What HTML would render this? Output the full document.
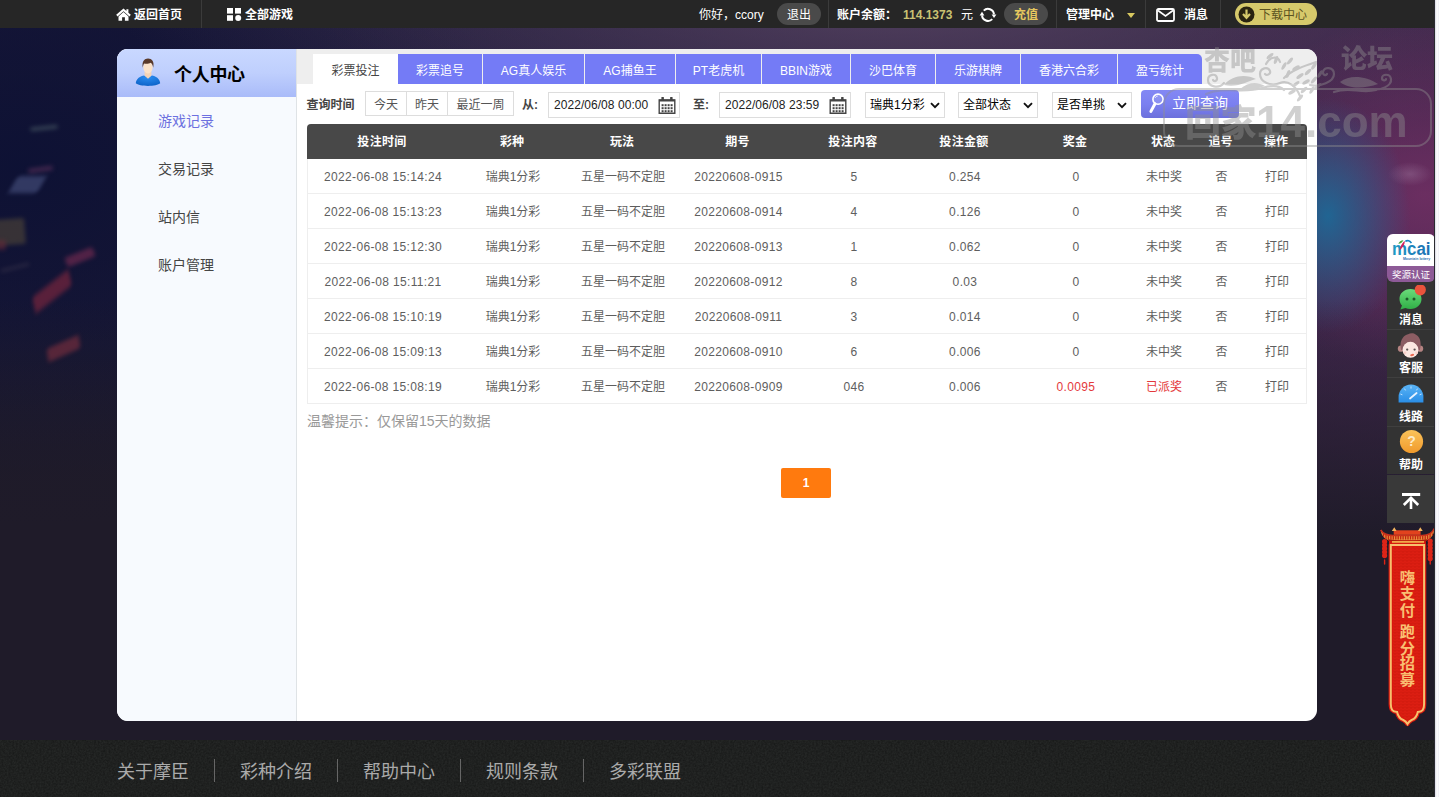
<!DOCTYPE html>
<html lang="zh-CN">
<head>
<meta charset="utf-8">
<title>个人中心</title>
<style>
*{box-sizing:border-box;margin:0;padding:0}
html,body{width:1439px;height:797px;overflow:hidden}
body{position:relative;font-family:"Liberation Sans","Noto Sans CJK SC",sans-serif;font-size:12px;color:#444;
background:#1f1b29;}
.abs{position:absolute}
#bg{position:absolute;left:0;top:0;width:1439px;height:797px;overflow:hidden;
background:
radial-gradient(ellipse 22px 12px at 1410px 174px,rgba(210,190,220,.22),rgba(210,190,220,0) 100%),
radial-gradient(ellipse 82px 118px at 1328px 216px,rgba(30,104,150,.95),rgba(36,100,140,0) 100%),
radial-gradient(ellipse 210px 180px at 1425px 195px,rgba(118,48,102,.78),rgba(110,50,100,0) 100%),
radial-gradient(ellipse 330px 420px at 1439px 250px,rgba(74,40,82,.8),rgba(70,40,80,0) 100%),
radial-gradient(ellipse 780px 150px at 900px 10px,rgba(90,70,100,.78),rgba(90,70,100,0) 100%),
linear-gradient(90deg,rgba(24,22,60,0) 0,rgba(24,22,60,0) 22%,rgba(58,40,72,.85) 100%) 0 0/1439px 560px no-repeat,
radial-gradient(ellipse 520px 360px at 20px 170px,rgba(13,17,52,.95),rgba(20,20,52,0) 100%),
linear-gradient(180deg,#1a1838 0,#1c1a36 330px,#1f1b29 480px,#1f1b29 100%);
}
#bgfade{position:absolute;left:0;top:0;width:1439px;height:797px;background:linear-gradient(180deg,rgba(31,27,41,0) 0,rgba(31,27,41,0) 300px,rgba(31,27,41,1) 540px)}
.conf{position:absolute;filter:blur(2.200px);border-radius:2px}
/* top bar */
#top{position:absolute;left:0;top:0;width:1439px;height:28px;background:#262626;color:#fff;font-size:12px;line-height:28px;font-weight:bold}
#top .t{position:absolute;top:1px;white-space:nowrap}
#top .sep{position:absolute;top:0;width:1px;height:28px;background:#3b3b3b}
.pill{position:absolute;top:3px;height:22px;border-radius:11px;background:#4a4a4a;text-align:center;line-height:24px;white-space:nowrap}
/* card */
#card{position:absolute;left:117px;top:49px;width:1200px;height:672px;border-radius:11px;background:#fff;overflow:hidden}
#side{position:absolute;left:0;top:0;width:180px;height:672px;background:#f7fafe;border-right:1px solid #dfe3e6}
#sidehead{position:absolute;left:0;top:0;width:179px;height:48px;background:linear-gradient(180deg,#c9d8ff 0,#bfcffd 50%,#a9bbf9 100%)}
#sidehead .ttl{position:absolute;left:57px;top:2px;line-height:48px;font-size:18px;font-weight:bold;color:#000;letter-spacing:-.3px}
.menu{position:absolute;left:41px;font-size:14px;line-height:20px;color:#444;white-space:nowrap}
#tabs{position:absolute;left:180px;top:0;width:1020px;height:35px;background:#eee}
.tab{position:absolute;top:5px;height:30px;line-height:34px;text-align:center;font-size:12px;color:#fff;background:#747bf6;white-space:nowrap}
.tab.on{background:#fff;color:#444}
/* filter */
.flabel{position:absolute;font-weight:bold;font-size:12px;color:#444;line-height:26px;top:43px;white-space:nowrap}
.qbtn{position:absolute;top:42px;height:25px;border:1px solid #ddd;border-left:none;background:#fff;font-size:12px;line-height:26px;text-align:center;color:#555}
.inp{position:absolute;top:43px;height:26px;border:1px solid #ddd;background:#fff;font-size:12px;line-height:25px;color:#222;padding-left:5px;white-space:nowrap;letter-spacing:.05px}
.sel{position:absolute;top:43px;height:26px;border:1px solid #ddd;background:#fff;font-size:12px;line-height:25px;color:#000;padding-left:4px;white-space:nowrap}
/* table */
#thead{position:absolute;left:190px;top:75px;width:1000px;height:35px;background:#484848;border-radius:4px 4px 0 0;color:#fff;font-weight:bold;font-size:12px;line-height:37px}
.row{position:absolute;left:190px;width:1000px;height:35px;border:1px solid #eee;border-top:none;font-size:12px;line-height:37px;color:#5e5e5e}
.c{position:absolute;top:0;text-align:center;white-space:nowrap}
.c1{left:0;width:150px}.c2{left:150px;width:110px}.c3{left:260px;width:110px}.c4{left:370px;width:121px}.c5{left:491px;width:110px}
.c6{left:601px;width:112px}.c7{left:713px;width:110px}.c8{left:823px;width:66px}.c9{left:889px;width:49px}.c10{left:938px;width:62px}
.red{color:#e4393c}
.c1,.c4,.c5,.c6,.c7{letter-spacing:.35px}
/* footer */
#foot{position:absolute;left:0;top:740px;width:1439px;height:57px;background:#252726}
#foot .l{position:absolute;top:19px;font-size:18px;line-height:26px;color:#aaa;white-space:nowrap}
#foot .s{position:absolute;top:19px;width:1px;height:23px;background:#666}
/* right float */
#rf{position:absolute;left:1387px;top:233px;width:48px}
.ri{position:absolute;left:0;width:48px;height:48px;border-bottom:1px solid #3f3f3f}
.rt{position:absolute;left:0;top:30px;width:48px;text-align:center;font-size:12px;font-weight:bold;color:#fff;line-height:16px}
#edge{position:absolute;left:1434px;top:0;width:5px;height:797px;background:linear-gradient(90deg,#2a2a30 0,#2a2a30 1px,#d8d8e4 1px,#fff 3px,#ececf4 5px)}
</style>
</head>
<body>
<div id="bg"><div id="bgfade"></div>
 <div class="conf" style="left:30px;top:126px;width:28px;height:4px;background:#4a5c66;opacity:0.61;transform:rotate(-6deg)"></div>
 <div class="conf" style="left:28px;top:167px;width:25px;height:5px;background:#5a305a;opacity:0.61;transform:rotate(-8deg)"></div>
 <div class="conf" style="left:13px;top:176px;width:29px;height:17px;background:#4c5684;opacity:0.58;transform:skewX(-30deg)"></div>
 <div class="conf" style="left:-8px;top:219px;width:33px;height:26px;background:#4c4338;opacity:0.65;transform:rotate(-4deg)"></div>
 <div class="conf" style="left:-4px;top:240px;width:10px;height:10px;background:#6a2a38;opacity:.55"></div>
 <div class="conf" style="left:65px;top:252px;width:30px;height:10px;background:#7a2c52;opacity:0.61;transform:rotate(-22deg)"></div>
 <div class="conf" style="left:29px;top:284px;width:46px;height:15px;background:#86283f;opacity:0.61;transform:rotate(-38deg) skewX(-25deg)"></div>
 <div class="conf" style="left:46px;top:342px;width:35px;height:13px;background:#80303f;opacity:0.61;transform:rotate(-24deg) skewX(-15deg)"></div>
 <div class="conf" style="left:0px;top:266px;width:30px;height:3px;background:#37324a;opacity:0.65;transform:rotate(-14deg)"></div></div>
<div id="top">
 <svg class="abs" style="left:116px;top:8px" width="15" height="13" viewBox="0 0 15 13"><path d="M7.500 0.400 L0.200 6.800 L1.500 8.400 L7.500 3.200 L13.500 8.400 L14.800 6.800 L12.400 4.700 V1.200 H10.400 V2.950 Z" fill="#fff"/><path d="M7.500 4.100 L2.500 8.400 V12.800 H6.100 V9.300 H8.900 V12.800 H12.500 V8.400 Z" fill="#fff"/></svg>
 <span class="t" style="left:134px">返回首页</span>
 <div class="sep" style="left:201px"></div>
 <svg class="abs" style="left:227px;top:7.500px" width="15" height="13" viewBox="0 0 15 13"><rect x="0" y="0" width="6" height="5.6" fill="#fff"/><rect x="8" y="0" width="6" height="5.6" fill="#fff"/><rect x="0" y="7.2" width="6" height="5.6" fill="#fff"/><circle cx="11.2" cy="10" r="3" fill="#fff"/></svg>
 <span class="t" style="left:245px">全部游戏</span>
 <span class="t" style="left:699px;font-weight:normal">你好，ccory</span>
 <div class="pill" style="left:777px;width:44px;font-weight:normal">退出</div>
 <div class="sep" style="left:828px"></div>
 <span class="t" style="left:837px">账户余额：</span>
 <span class="t" style="left:903px;color:#c9c272">114.1373</span>
 <span class="t" style="left:961px;font-weight:normal">元</span>
 <svg class="abs" style="left:979px;top:6px" width="18" height="18" viewBox="0 0 18 18"><path d="M4.760 4.660 A6 6 0 0 1 14.980 8.400" fill="none" stroke="#fff" stroke-width="2"/><path d="M13.240 13.140 A6 6 0 0 1 3.020 9.400" fill="none" stroke="#fff" stroke-width="2"/><path d="M12.600 8.400 H17.400 L15 12 Z" fill="#fff"/><path d="M0.600 9.400 H5.400 L3 5.800 Z" fill="#fff"/></svg>
 <div class="pill" style="left:1004px;width:44px;color:#e6c75e">充值</div>
 <div class="sep" style="left:1056px"></div>
 <span class="t" style="left:1066px">管理中心</span>
 <div class="abs" style="left:1127px;top:13px;width:0;height:0;border-left:4px solid transparent;border-right:4px solid transparent;border-top:5px solid #d8c860"></div>
 <div class="sep" style="left:1145px"></div>
 <svg class="abs" style="left:1156px;top:8px" width="19" height="14" viewBox="0 0 19 14"><rect x="1" y="1" width="17" height="12" rx="1.5" fill="none" stroke="#fff" stroke-width="1.8"/><path d="M2 2.5 L9.5 8 L17 2.5" fill="none" stroke="#fff" stroke-width="1.6"/></svg>
 <span class="t" style="left:1184px">消息</span>
 <div class="sep" style="left:1220px"></div>
 <div class="pill" style="left:1235px;width:82px;background:#d6c96b;color:#5c5320;font-weight:normal;text-align:left;padding-left:24px">下载中心</div>
 <svg class="abs" style="left:1238px;top:6px" width="17" height="17" viewBox="0 0 17 17"><circle cx="8.5" cy="8.5" r="8" fill="#2a2410"/><path d="M8.5 3.5 V10.5 M5 8 L8.5 11.8 L12 8" fill="none" stroke="#d6c96b" stroke-width="2.2"/></svg>
</div>
<div id="card">
 <div id="side"><div id="sidehead">
  <svg class="abs" style="left:18px;top:8.500px" width="26" height="30" viewBox="0 0 26 29" preserveAspectRatio="none">
   <defs><radialGradient id="bd" cx=".5" cy=".2" r=".9"><stop offset="0" stop-color="#2a8cf0"/><stop offset="1" stop-color="#0a5fc4"/></radialGradient></defs>
   <path d="M0.8 24.5 C1 19.5 5.5 17.6 9.2 16.8 L13 19.6 L16.8 16.8 C20.5 17.6 25 19.5 25.2 24.5 C22 27.8 4 27.8 0.8 24.5 Z" fill="url(#bd)"/>
   <path d="M9.6 13.5 H16.4 V17 L13 20 L9.6 17 Z" fill="#f3d3b6"/>
   <ellipse cx="13" cy="9" rx="4.6" ry="6" fill="#fbe2c8"/>
   <path d="M7.8 9.5 C6.6 3.5 9.5 0.6 13 0.6 C16.8 0.6 19.6 3.4 18.2 9.5 C17.8 6.6 16.6 5 15.6 4.6 C13.6 5.8 10.4 5.6 9.2 5.2 C8.4 6.2 8 7.6 7.8 9.5 Z" fill="#5a3a2a"/>
  </svg>
  <span class="ttl">个人中心</span></div>
  <span class="menu" style="top:62px;color:#6c70e0">游戏记录</span>
  <span class="menu" style="top:110px">交易记录</span>
  <span class="menu" style="top:158px">站内信</span>
  <span class="menu" style="top:206px">账户管理</span>
 </div>
 <div id="tabs"><div class="tab on" style="left:16px;width:85px">彩票投注</div><div class="tab" style="left:101px;width:84px">彩票追号</div><div class="tab" style="left:186px;width:101px">AG真人娱乐</div><div class="tab" style="left:288px;width:90px">AG捕鱼王</div><div class="tab" style="left:379px;width:85px">PT老虎机</div><div class="tab" style="left:465px;width:88px">BBIN游戏</div><div class="tab" style="left:554px;width:84px">沙巴体育</div><div class="tab" style="left:639px;width:84px">乐游棋牌</div><div class="tab" style="left:724px;width:96px">香港六合彩</div><div class="tab" style="left:821px;width:84px;border-radius:0 5px 0 0">盈亏统计</div></div>
 <span class="flabel" style="left:189.500px">查询时间</span>
 <div class="qbtn" style="left:248px;width:42px;border-left:1px solid #ddd">今天</div>
 <div class="qbtn" style="left:290px;width:41px">昨天</div>
 <div class="qbtn" style="left:331px;width:66px">最近一周</div>
 <span class="flabel" style="left:405px">从:</span>
 <div class="inp" style="left:431px;width:132px">2022/06/08 00:00<svg class="abs" style="right:3px;top:4px" width="18" height="18" viewBox="0 0 18 18"><path d="M1.200 3 H16.800 V16.300 H1.200 Z" fill="none" stroke="#444" stroke-width="1.400"/><path d="M1.200 2.600 H16.800 V4.600 H1.200 Z" fill="#444"/><rect x="3.400" y="0" width="2.500" height="4" rx=".6" fill="#444"/><rect x="12.100" y="0" width="2.500" height="4" rx=".6" fill="#444"/><g fill="#444"><rect x="3.6" y="7.2" width="2" height="2"/><rect x="6.6" y="7.2" width="2" height="2"/><rect x="9.6" y="7.2" width="2" height="2"/><rect x="12.6" y="7.2" width="2" height="2"/><rect x="3.6" y="10.2" width="2" height="2"/><rect x="6.6" y="10.2" width="2" height="2"/><rect x="9.6" y="10.2" width="2" height="2"/><rect x="12.6" y="10.2" width="2" height="2"/><rect x="3.6" y="13.2" width="2" height="2"/><rect x="6.6" y="13.2" width="2" height="2"/><rect x="9.6" y="13.2" width="2" height="2"/><rect x="12.6" y="13.2" width="2" height="2"/></g></svg></div>
 <span class="flabel" style="left:576px">至:</span>
 <div class="inp" style="left:602px;width:132px">2022/06/08 23:59<svg class="abs" style="right:3px;top:4px" width="18" height="18" viewBox="0 0 18 18"><path d="M1.200 3 H16.800 V16.300 H1.200 Z" fill="none" stroke="#444" stroke-width="1.400"/><path d="M1.200 2.600 H16.800 V4.600 H1.200 Z" fill="#444"/><rect x="3.400" y="0" width="2.500" height="4" rx=".6" fill="#444"/><rect x="12.100" y="0" width="2.500" height="4" rx=".6" fill="#444"/><g fill="#444"><rect x="3.6" y="7.2" width="2" height="2"/><rect x="6.6" y="7.2" width="2" height="2"/><rect x="9.6" y="7.2" width="2" height="2"/><rect x="12.6" y="7.2" width="2" height="2"/><rect x="3.6" y="10.2" width="2" height="2"/><rect x="6.6" y="10.2" width="2" height="2"/><rect x="9.6" y="10.2" width="2" height="2"/><rect x="12.6" y="10.2" width="2" height="2"/><rect x="3.6" y="13.2" width="2" height="2"/><rect x="6.6" y="13.2" width="2" height="2"/><rect x="9.6" y="13.2" width="2" height="2"/><rect x="12.6" y="13.2" width="2" height="2"/></g></svg></div>
 <div class="sel" style="left:748px;width:80px">瑞典1分彩<svg class="abs" style="right:4px;top:9px" width="10" height="7" viewBox="0 0 10 7"><path d="M1 1.200 L5 5.200 L9 1.200" fill="none" stroke="#111" stroke-width="1.900"/></svg></div>
 <div class="sel" style="left:841px;width:80px">全部状态<svg class="abs" style="right:4px;top:9px" width="10" height="7" viewBox="0 0 10 7"><path d="M1 1.200 L5 5.200 L9 1.200" fill="none" stroke="#111" stroke-width="1.900"/></svg></div>
 <div class="sel" style="left:935px;width:80px">是否单挑<svg class="abs" style="right:4px;top:9px" width="10" height="7" viewBox="0 0 10 7"><path d="M1 1.200 L5 5.200 L9 1.200" fill="none" stroke="#111" stroke-width="1.900"/></svg></div>
 <div class="abs" style="left:1024px;top:41px;width:98px;height:28px;border-radius:4px;background:linear-gradient(180deg,#8388f4 0,#7b80f0 50%,#6c70dc 100%);color:#fff;font-size:14px;line-height:27px;padding-left:31px;white-space:nowrap">立即查询
  <svg class="abs" style="left:7px;top:3px" width="20" height="22" viewBox="0 0 20 22"><circle cx="10" cy="6.200" r="5.100" fill="rgba(255,255,255,.12)" stroke="#fff" stroke-width="1.600"/><path d="M7 10.800 L2.900 18.400" stroke="#fff" stroke-width="3" stroke-linecap="round"/><path d="M7 5 A3.400 3.400 0 0 1 9.800 3" fill="none" stroke="#fff" stroke-width=".9" opacity=".8"/></svg>
 </div>
 <div id="thead"><span class="c c1">投注时间</span><span class="c c2">彩种</span><span class="c c3">玩法</span><span class="c c4">期号</span><span class="c c5">投注内容</span><span class="c c6">投注金额</span><span class="c c7">奖金</span><span class="c c8">状态</span><span class="c c9">追号</span><span class="c c10">操作</span></div>
 <div class="row" style="top:110px"><span class="c c1">2022-06-08 15:14:24</span><span class="c c2">瑞典1分彩</span><span class="c c3">五星一码不定胆</span><span class="c c4">20220608-0915</span><span class="c c5">5</span><span class="c c6">0.254</span><span class="c c7">0</span><span class="c c8">未中奖</span><span class="c c9">否</span><span class="c c10">打印</span></div>
 <div class="row" style="top:145px"><span class="c c1">2022-06-08 15:13:23</span><span class="c c2">瑞典1分彩</span><span class="c c3">五星一码不定胆</span><span class="c c4">20220608-0914</span><span class="c c5">4</span><span class="c c6">0.126</span><span class="c c7">0</span><span class="c c8">未中奖</span><span class="c c9">否</span><span class="c c10">打印</span></div>
 <div class="row" style="top:180px"><span class="c c1">2022-06-08 15:12:30</span><span class="c c2">瑞典1分彩</span><span class="c c3">五星一码不定胆</span><span class="c c4">20220608-0913</span><span class="c c5">1</span><span class="c c6">0.062</span><span class="c c7">0</span><span class="c c8">未中奖</span><span class="c c9">否</span><span class="c c10">打印</span></div>
 <div class="row" style="top:215px"><span class="c c1">2022-06-08 15:11:21</span><span class="c c2">瑞典1分彩</span><span class="c c3">五星一码不定胆</span><span class="c c4">20220608-0912</span><span class="c c5">8</span><span class="c c6">0.03</span><span class="c c7">0</span><span class="c c8">未中奖</span><span class="c c9">否</span><span class="c c10">打印</span></div>
 <div class="row" style="top:250px"><span class="c c1">2022-06-08 15:10:19</span><span class="c c2">瑞典1分彩</span><span class="c c3">五星一码不定胆</span><span class="c c4">20220608-0911</span><span class="c c5">3</span><span class="c c6">0.014</span><span class="c c7">0</span><span class="c c8">未中奖</span><span class="c c9">否</span><span class="c c10">打印</span></div>
 <div class="row" style="top:285px"><span class="c c1">2022-06-08 15:09:13</span><span class="c c2">瑞典1分彩</span><span class="c c3">五星一码不定胆</span><span class="c c4">20220608-0910</span><span class="c c5">6</span><span class="c c6">0.006</span><span class="c c7">0</span><span class="c c8">未中奖</span><span class="c c9">否</span><span class="c c10">打印</span></div>
 <div class="row" style="top:320px"><span class="c c1">2022-06-08 15:08:19</span><span class="c c2">瑞典1分彩</span><span class="c c3">五星一码不定胆</span><span class="c c4">20220608-0909</span><span class="c c5">046</span><span class="c c6">0.006</span><span class="c c7 red">0.0095</span><span class="c c8 red">已派奖</span><span class="c c9">否</span><span class="c c10">打印</span></div>
 <div class="abs" style="left:190px;top:362px;font-size:14px;line-height:20px;color:#999;white-space:nowrap">温馨提示：仅保留15天的数据</div>
 <div class="abs" style="left:664px;top:419px;width:50px;height:30px;border-radius:2px;background:#ff7a0e;color:#fff;font-size:12px;font-weight:bold;line-height:30px;text-align:center">1</div>
</div>
<div id="foot">
 <svg class="abs" style="left:0;top:0" width="1439" height="57"><filter id="nz" x="0" y="0" width="100%" height="100%"><feTurbulence type="fractalNoise" baseFrequency=".55" numOctaves="2" seed="4"/><feColorMatrix values="0 0 0 0 0  0 0 0 0 0  0 0 0 0 0  0 0 0 .55 -.12"/></filter><rect width="1439" height="57" filter="url(#nz)"/></svg>
 <span class="l" style="left:117px">关于摩臣</span><div class="s" style="left:214px"></div>
 <span class="l" style="left:240px">彩种介绍</span><div class="s" style="left:337px"></div>
 <span class="l" style="left:363px">帮助中心</span><div class="s" style="left:460px"></div>
 <span class="l" style="left:486px">规则条款</span><div class="s" style="left:583px"></div>
 <span class="l" style="left:609px">多彩联盟</span>
</div>
<div id="rf">
 <div class="abs" style="left:0;top:43px;width:48px;height:197.500px;background:#333"></div>
 <div class="abs" style="left:0;top:.7px;width:48px;height:48.300px;border-radius:6px;background:#8d5a97;overflow:hidden">
  <div class="abs" style="left:0;top:0;width:48px;height:32.300px;background:#fff"></div>
  <svg class="abs" style="left:0;top:-.7px" width="48" height="33" viewBox="0 0 48 33">
   <defs><linearGradient id="lg1" x1="0" y1="0" x2="1" y2="0"><stop offset="0" stop-color="#1f9cc6"/><stop offset="1" stop-color="#1b6fb2"/></linearGradient></defs>
   <text x="24.300" y="22" text-anchor="middle" font-family="Liberation Sans, sans-serif" font-weight="bold" font-size="18" fill="url(#lg1)" textLength="38.500" lengthAdjust="spacingAndGlyphs">mcai</text>
   <path d="M12.600 17.500 C13 13.500 15 10 17.800 7.800 C18 11 16 14.500 12.600 17.500 Z" fill="#d4245e"/>
   <path d="M11.300 10.800 C12 8.600 14 7.400 16.400 7.200 C15.600 9.200 13.800 10.500 11.300 10.800 Z" fill="#4aa83c"/>
   <path d="M18.300 8.400 C20.500 7 23 7.600 24.400 10.200" fill="none" stroke="#1b86c4" stroke-width="1.700"/>
   <text x="29.500" y="27" text-anchor="middle" font-family="Liberation Sans, sans-serif" font-weight="bold" font-size="3.500" fill="#2a6fae">Mountain lottery</text>
  </svg>
  <div class="abs" style="left:0;top:32.300px;width:48px;height:16px;line-height:18px;font-size:9.500px;color:#fff;text-align:center;letter-spacing:0">奖源认证</div>
 </div>
 <div class="ri" style="top:49px">
  <svg class="abs" style="left:10px;top:3px" width="30" height="30" viewBox="0 0 30 30"><defs><linearGradient id="gg" x1="0" y1="0" x2="0" y2="1"><stop offset="0" stop-color="#6adb7a"/><stop offset="1" stop-color="#2fae46"/></linearGradient></defs><path d="M13.5 4 C19.8 4 24.5 8.4 24.5 14 C24.5 19.6 19.8 24 13.5 24 C11.6 24 9.9 23.6 8.4 23 L3.4 24.6 L5 20.6 C3.4 18.8 2.5 16.5 2.5 14 C2.5 8.4 7.2 4 13.5 4 Z" fill="url(#gg)"/><circle cx="10" cy="14" r="1.5" fill="#1d5a2a"/><circle cx="17" cy="14" r="1.5" fill="#1d5a2a"/><circle cx="23.300" cy="4.800" r="5.600" fill="#e9533c"/></svg>
  <span class="rt">消息</span></div>
 <div class="ri" style="top:97px">
  <svg class="abs" style="left:9.500px;top:3px" width="27" height="27" viewBox="0 0 27 27"><circle cx="3.900" cy="15.700" r="3.100" fill="#b58482"/><circle cx="23.100" cy="15.700" r="3.100" fill="#b58482"/><path d="M4.200 17 C1.800 8.500 6 2.600 11 1.300 C13.500 -0.200 17 0 18.600 1.500 C23 3.500 25 10 22.800 17 Z" fill="#8c5d63"/><ellipse cx="13.500" cy="16.800" rx="7.900" ry="8" fill="#fbe7e1"/><path d="M5.300 14.500 C6 9.500 9 7 12.500 6.500 C15 8.500 19 9.500 21.800 14.500 C21.500 8 18 4 13.500 4 C9 4 5.300 8 5.300 14.500 Z" fill="#8c5d63"/><circle cx="10.200" cy="16.600" r="1.150" fill="#5c5252"/><circle cx="17.600" cy="16.600" r="1.150" fill="#5c5252"/><ellipse cx="15.200" cy="22" rx="2" ry="1.100" fill="#ea6a52" transform="rotate(-12 15.200 22)"/><circle cx="8" cy="19.800" r="1.400" fill="#f8cfc8"/><circle cx="19.600" cy="19.800" r="1.400" fill="#f8cfc8"/></svg>
  <span class="rt">客服</span></div>
 <div class="ri" style="top:146px">
  <svg class="abs" style="left:11px;top:5px" width="26" height="20" viewBox="0 0 26 20"><defs><linearGradient id="bg2" x1="0" y1="0" x2="0" y2="1"><stop offset="0" stop-color="#5ab4f6"/><stop offset="1" stop-color="#2a8ee6"/></linearGradient></defs><path d="M0.6 18.4 V13 A12.4 12.4 0 0 1 25.4 13 V18.4 Z" fill="url(#bg2)"/><path d="M12 14.5 L18.6 9" stroke="#e8f2ff" stroke-width="1.8" stroke-linecap="round"/><g stroke="#bfe0ff" stroke-width="1"><path d="M13 2.4 V4.6"/><path d="M6.4 4.6 L7.6 6.4"/><path d="M19.6 4.6 L18.4 6.4"/><path d="M2.4 10 L4.4 10.8"/><path d="M23.6 10 L21.6 10.8"/></g></svg>
  <span class="rt">线路</span></div>
 <div class="ri" style="top:194px;border-bottom:none">
  <svg class="abs" style="left:11.500px;top:2px" width="25" height="25" viewBox="0 0 25 25"><defs><linearGradient id="og" x1="0" y1="0" x2="0" y2="1"><stop offset="0" stop-color="#fbc35a"/><stop offset="1" stop-color="#f09a2c"/></linearGradient></defs><circle cx="12.5" cy="12.5" r="11.6" fill="url(#og)"/><text x="12.500" y="17.300" text-anchor="middle" font-family="Liberation Sans, sans-serif" font-weight="bold" font-size="14" fill="#fdebc8">?</text></svg>
  <span class="rt">帮助</span></div>
 <div class="abs" style="left:0;top:241.500px;width:48px;height:48px;background:#393939">
  <svg class="abs" style="left:14px;top:18px" width="20" height="17" viewBox="0 0 20 17"><path d="M1 1.500 H19.200" stroke="#fff" stroke-width="3"/><path d="M10 4.500 V16" stroke="#fff" stroke-width="2.600"/><path d="M2.800 12 L10 4.800 L17.200 12" fill="none" stroke="#fff" stroke-width="2.600"/></svg>
 </div>
</div>
<svg class="abs" style="left:1379px;top:526px" width="58" height="204" viewBox="0 0 58 204">
 <defs><pattern id="sc" width="4" height="3" patternUnits="userSpaceOnUse"><rect width="4" height="3" fill="#dc1e12"/><path d="M0 3 A2 2 0 0 1 4 3" fill="none" stroke="#c8160a" stroke-width=".5"/></pattern>
 <clipPath id="rc"><path d="M1.700 4 C4 8 9 9.500 14 9.500 H43.300 C48.300 9.500 53.300 7.500 55.300 2.500 C55 9 52 13 47 14.300 H10.300 C5.300 13 2.300 9.500 1.700 4 Z"/></clipPath></defs>
 <path d="M10 14 H46.900 V20 H10 Z" fill="#d8180e"/>
 <path d="M11.800 19 H45.100 V178 C45.100 184 43.300 185.500 38.800 186 C37.800 191 35.300 193 32.600 194 C30.800 194.800 29.500 196 28.450 197.900 C27.400 196 26.100 194.800 24.300 194 C21.600 193 19.100 191 18.100 186 C13.600 185.500 11.800 184 11.800 178 Z" fill="url(#sc)" stroke="#d8180e" stroke-width="4.400" stroke-linejoin="round"/>
 <path d="M11.800 19 H45.100 V178 C45.100 184 43.300 185.500 38.800 186 C37.800 191 35.300 193 32.600 194 C30.800 194.800 29.500 196 28.450 197.900 C27.400 196 26.100 194.800 24.300 194 C21.600 193 19.100 191 18.100 186 C13.600 185.500 11.800 184 11.800 178 Z" fill="none" stroke="#f7c06c" stroke-width="2"/>
 <path d="M1.700 4 C4 8 9 9.500 14 9.500 H43.300 C48.300 9.500 53.300 7.500 55.300 2.500 C55 9 52 13 47 14.300 H10.300 C5.300 13 2.300 9.500 1.700 4 Z" fill="#e8923e"/>
 <g clip-path="url(#rc)" stroke="#c42410" stroke-width="1.300"><path d="M4.5 8.500 V14.500 M7.0 8.500 V14.500 M9.4 8.500 V14.500 M11.9 8.500 V14.500 M14.3 8.500 V14.500 M16.8 8.500 V14.500 M19.2 8.500 V14.500 M21.7 8.500 V14.500 M24.1 8.500 V14.500 M26.6 8.500 V14.500 M29.0 8.500 V14.500 M31.5 8.500 V14.500 M33.9 8.500 V14.500 M36.4 8.500 V14.500 M38.8 8.500 V14.500 M41.2 8.500 V14.500 M43.7 8.500 V14.500 M46.2 8.500 V14.500 M48.6 8.500 V14.500 M51.1 8.500 V14.500 M53.5 8.500 V14.500" transform="translate(0 -1)"/></g>
 <path d="M1.700 4 C4 8 9 9.500 14 9.500 H43.300 C48.300 9.500 53.300 7.500 55.300 2.500" fill="none" stroke="#c9301c" stroke-width="1.600"/>
 <path d="M14.700 4.300 H41.600 V8.800 H14.700 Z" fill="#e2421e"/>
 <path d="M15.300 1.200 L17.600 5 H12.800 Z M41.300 1.200 L43.700 5 H38.900 Z" fill="#f2b35e"/>
 <path d="M9 13.200 C20 15 38 15 48 13.200 V15 H9 Z" fill="#a81a0c"/>
 <path d="M13 15 H45 V16.800 H13 Z" fill="#f0aa4a"/>
 <g stroke="#dc2418" stroke-linecap="round" fill="none"><path d="M5.600 15.500 V33" stroke-width="5.200" stroke-dasharray="0.100 3.400"/><path d="M5.600 34 V38" stroke-width="1.400"/><path d="M51.200 15 V33" stroke-width="5.200" stroke-dasharray="0.100 3.400"/><path d="M51.200 34 V38" stroke-width="1.400"/></g>
 <g font-family="Liberation Sans, Noto Sans CJK SC, sans-serif" font-weight="bold" font-size="15.300" fill="#f9bf72" text-anchor="middle">
  <text x="28.500" y="56.700">嗨</text><text x="28.500" y="73.400">支</text><text x="28.500" y="89.900">付</text>
  <text x="28.500" y="111.400">跑</text><text x="28.500" y="127.600">分</text><text x="28.500" y="143.400">招</text><text x="28.500" y="159.400">募</text>
 </g>
</svg>
<div id="wm" class="abs" style="left:1150px;top:40px;width:289px;height:120px;pointer-events:none;color:#909090;opacity:.42;font-weight:900;white-space:nowrap;overflow:hidden">
 <span class="abs" style="left:54px;top:3px;font-size:26px;line-height:36px">杏吧</span>
 <span class="abs" style="left:191px;top:1px;font-size:26px;line-height:36px">论坛</span>
 <div class="abs" style="left:13px;top:48px;width:269px;height:59px;border:2px solid #909090;border-radius:16px"></div>
 <span class="abs" style="left:35px;top:54px;font-size:44px;line-height:56px"><span style="font-size:36px;letter-spacing:-.5px;position:relative;top:-1px">回家</span><span style="font-weight:bold">14.com</span></span>
 <svg class="abs" style="left:50px;top:12px" width="200" height="50" viewBox="0 0 200 50"><g fill="none" stroke="#909090" stroke-width="2.200" stroke-linecap="round"><path d="M24 31 C19 37 8 35 8 28 C8 22 16 21 17 26 C17.500 29 14 30 13 28"/><path d="M6 42 C24 34 44 42 62 36 C72 33 80 34 84 38"/><path d="M80 31 C71 35 60 30 60 22 C60 16 68 14 70 19 C71 22 67 24 65 22"/><path d="M66 12 C70 4 78 4 80 10 M80 31 C88 28 96 34 100 44 M84 26 C92 18 104 14 116 10"/><path d="M110 33 C120 35 134 30 134 22 C134 15 124 14 123 20 C122.500 23 126 24 127 22"/><path d="M172 37 C180 39 192 34 191 27 C190 21 182 22 182 26 C182 29 186 29 186 27"/><path d="M134 40 C150 34 160 42 176 38"/></g><g fill="#909090"><path d="M24 33 C32 23 46 22 56 27 C48 29 38 36 24 33 Z"/><path d="M40 37 C48 30 58 30 65 34 C56 37 48 41 40 37 Z"/><path d="M140 30 C150 22 166 24 178 32 C166 36 150 38 140 30 Z"/><ellipse cx="84" cy="14" rx="4.200" ry="1.700" transform="rotate(-60 84 14)"/><ellipse cx="90" cy="9" rx="4.200" ry="1.700" transform="rotate(-50 90 9)"/><ellipse cx="96" cy="16" rx="4.200" ry="1.700" transform="rotate(-30 96 16)"/><ellipse cx="88" cy="22" rx="4.200" ry="1.700" transform="rotate(-70 88 22)"/><ellipse cx="100" cy="24" rx="4.200" ry="1.700" transform="rotate(-35 100 24)"/><ellipse cx="108" cy="20" rx="4.200" ry="1.700" transform="rotate(-45 108 20)"/><ellipse cx="114" cy="14" rx="4.200" ry="1.700" transform="rotate(-55 114 14)"/><ellipse cx="106" cy="30" rx="4.200" ry="1.700" transform="rotate(-30 106 30)"/><ellipse cx="114" cy="28" rx="4.200" ry="1.700" transform="rotate(-50 114 28)"/><ellipse cx="96" cy="32" rx="4.200" ry="1.700" transform="rotate(-40 96 32)"/><ellipse cx="104" cy="38" rx="4.200" ry="1.700" transform="rotate(-45 104 38)"/><ellipse cx="112" cy="38" rx="4.200" ry="1.700" transform="rotate(-60 112 38)"/><ellipse cx="92" cy="40" rx="4.200" ry="1.700" transform="rotate(-30 92 40)"/><ellipse cx="100" cy="46" rx="4.200" ry="1.700" transform="rotate(-50 100 46)"/><ellipse cx="76" cy="8" rx="4.200" ry="1.700" transform="rotate(-70 76 8)"/><ellipse cx="70" cy="4" rx="4.200" ry="1.700" transform="rotate(-40 70 4)"/><ellipse cx="120" cy="22" rx="4.200" ry="1.700" transform="rotate(-60 120 22)"/><ellipse cx="118" cy="34" rx="4.200" ry="1.700" transform="rotate(-40 118 34)"/></g></svg>
</div>
<div id="edge"></div>
</body>
</html>
